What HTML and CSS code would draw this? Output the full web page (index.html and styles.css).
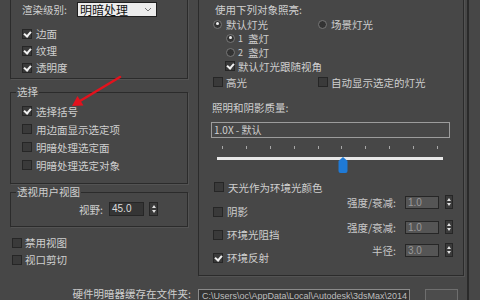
FILE: index.html
```html
<!DOCTYPE html>
<html lang="zh-CN">
<head>
    <meta charset="UTF-8">
    <meta name="viewport" content="width=device-width, initial-scale=1.0">
    <title>视口配置</title>
    <link rel="stylesheet" href="styles.css">
</head>
<body>
    <div class="window">
        <div class="left-col">
            <div class="group render-group">
                <div class="field-row">
                    <span class="render-label">渲染级别:</span>
                    <div class="dropdown">
                        <span>明暗处理</span>
                        <svg width="8" height="5" viewBox="0 0 8 5"><path d="M1 1 L4 4 L7 1" fill="none" stroke="#777" stroke-width="1"/></svg>
                    </div>
                </div>
                <div class="check-row first"><span class="check checked"></span>边面</div>
                <div class="check-row"><span class="check checked"></span>纹理</div>
                <div class="check-row"><span class="check checked"></span>透明度</div>
            </div>

            <fieldset class="select-group">
                <legend>选择</legend>
                <div class="group-body">
                    <div class="check-row"><span class="check checked"></span>选择括号</div>
                    <div class="check-row"><span class="check"></span>用边面显示选定项</div>
                    <div class="check-row"><span class="check"></span>明暗处理选定面</div>
                    <div class="check-row"><span class="check"></span>明暗处理选定对象</div>
                </div>
            </fieldset>

            <fieldset class="view-group">
                <legend>透视用户视图</legend>
                <div class="fov-row">
                    <span class="fov-label">视野:</span>
                    <div class="num-box active">45.0</div>
                    <div class="spinner"><span class="up"></span><span class="down"></span></div>
                </div>
            </fieldset>

            <div class="loose-checks">
                <div class="check-row"><span class="check"></span>禁用视图</div>
                <div class="check-row"><span class="check"></span>视口剪切</div>
            </div>

            <div class="cache-label">硬件明暗器缓存在文件夹:</div>
        </div>

        <div class="right-col">
            <div class="group light-group">
                <div class="group-title">使用下列对象照亮:</div>
                <div class="radio-row">
                    <div class="radio-item wide"><span class="radio on"></span>默认灯光</div>
                    <div class="radio-item"><span class="radio"></span>场景灯光</div>
                </div>
                <div class="radio-row sub"><div class="radio-item"><span class="radio on"></span><span class="num">1</span>盏灯</div></div>
                <div class="radio-row sub"><div class="radio-item"><span class="radio"></span><span class="num">2</span>盏灯</div></div>
                <div class="check-row sub"><span class="check checked"></span>默认灯光跟随视角</div>
                <div class="option-row">
                    <div class="check-row wide"><span class="check"></span>高光</div>
                    <div class="check-row"><span class="check"></span>自动显示选定的灯光</div>
                </div>

                <div class="section-title">照明和阴影质量:</div>
                <div class="quality-box">1.0X - 默认</div>
                <div class="slider">
                    <div class="ticks">
                        <span class="tick"></span><span class="tick"></span><span class="tick"></span><span class="tick"></span><span class="tick"></span>
                        <span class="tick"></span><span class="tick"></span><span class="tick"></span><span class="tick"></span><span class="tick"></span>
                    </div>
                    <div class="track"></div>
                    <svg class="thumb" width="10" height="16" viewBox="0 0 10 16"><path d="M5 0 L9.5 4 L9.5 14 Q9.5 16 7.5 16 L2.5 16 Q0.5 16 0.5 14 L0.5 4 Z" fill="#1f7ad6"/></svg>
                </div>

                <div class="check-row sky-row"><span class="check"></span>天光作为环境光颜色</div>
                <div class="lower">
                    <div class="lower-left">
                        <div class="check-row"><span class="check"></span>阴影</div>
                        <div class="check-row"><span class="check"></span>环境光阻挡</div>
                        <div class="check-row"><span class="check checked"></span>环境反射</div>
                    </div>
                    <div class="lower-right">
                        <div class="spin-row r1">
                            <span class="spin-label">强度/衰减:</span>
                            <div class="num-box">1.0</div>
                            <div class="spinner"><span class="up"></span><span class="down"></span></div>
                        </div>
                        <div class="spin-row r2">
                            <span class="spin-label">强度/衰减:</span>
                            <div class="num-box">1.0</div>
                            <div class="spinner"><span class="up"></span><span class="down"></span></div>
                        </div>
                        <div class="spin-row r3">
                            <span class="spin-label">半径:</span>
                            <div class="num-box">3.0</div>
                            <div class="spinner"><span class="up"></span><span class="down"></span></div>
                        </div>
                    </div>
                </div>
            </div>

            <div class="path-row">
                <div class="path-box">C:\Users\oc\AppData\Local\Autodesk\3dsMax\2014</div>
                <div class="browse-btn"></div>
            </div>
        </div>

        <div class="frame-edge"></div>
    </div>

    <!-- annotation arrow drawn over the dialog -->
    <svg class="arrow" width="480" height="300" viewBox="0 0 480 300">
        <line x1="120" y1="77" x2="80" y2="101" stroke="#e3121d" stroke-width="2.5" stroke-linecap="round"/>
        <polygon points="72,106 83.5,105.5 77.5,96" fill="#e3121d"/>
    </svg>
</body>
</html>
```

FILE: styles.css
```css
body {
    margin: 0;
    width: 480px;
    height: 300px;
    overflow: hidden;
    position: relative;
    background-color: #474747;
    color: #cfcfcf;
    font-family: "Noto Sans CJK SC", "Liberation Sans", sans-serif;
    font-size: 10.5px;
}
.window {
    display: flex;
    padding-left: 10px;
}
.left-col {
    width: 178px;
    flex-shrink: 0;
}
.right-col {
    width: 266px;
    margin-left: 10px;
    flex-shrink: 0;
}
.frame-edge {
    width: 2px;
    height: 300px;
    margin-left: 3px;
    background: #2a2a2a;
}
.group,
fieldset {
    border: 1px solid #2b2b2b;
    box-shadow: 1px 1px 0 #535353;
}

/* checkboxes and radios */
.check-row {
    display: flex;
    align-items: center;
    gap: 4px;
    height: 17px;
    white-space: nowrap;
}
.check {
    position: relative;
    width: 10px;
    height: 10px;
    box-sizing: border-box;
    border: 1px solid #262626;
    background: #3a3a3a;
    flex-shrink: 0;
}
.check.checked::after {
    content: '';
    position: absolute;
    left: 2px;
    top: 0;
    width: 3px;
    height: 5px;
    border: solid #f2f2f2;
    border-width: 0 2px 2px 0;
    transform: rotate(40deg);
}
.radio {
    position: relative;
    width: 9px;
    height: 9px;
    box-sizing: border-box;
    border-radius: 50%;
    border: 1.5px solid #777;
    background: #333;
    flex-shrink: 0;
}
.radio.on::after {
    content: '';
    position: absolute;
    left: 1.5px;
    top: 1.5px;
    width: 3px;
    height: 3px;
    border-radius: 50%;
    background: #f0f0f0;
}

/* left column */
.render-group {
    margin-top: -10px;
    padding: 11px 0 2px 11px;
}
.field-row {
    display: flex;
    align-items: center;
    height: 15px;
}
.render-label {
    width: 55px;
}
.dropdown {
    display: flex;
    align-items: center;
    justify-content: space-between;
    width: 80px;
    height: 15px;
    box-sizing: border-box;
    padding: 0 4px 0 2px;
    border: 1px solid #1e1e1e;
    background: #ececec;
    color: #111;
    font-size: 12px;
    line-height: 13px;
}
.check-row.first {
    margin-top: 8px;
}
fieldset {
    margin: 0;
    padding: 3px 0 9px 0;
    min-width: 0;
}
legend {
    margin-left: 5px;
    padding: 0 1px;
    line-height: 14px;
}
.select-group {
    margin-top: 6px;
}
.group-body {
    padding-left: 11px;
}
.select-group .check-row {
    height: 18px;
}
.view-group {
    margin-top: 1px;
    padding-bottom: 10px;
}
.fov-row {
    display: flex;
    align-items: center;
    height: 14px;
    padding-left: 68px;
}
.fov-label {
    width: 30px;
}
.num-box {
    width: 34px;
    height: 13px;
    box-sizing: border-box;
    padding-left: 2px;
    border: 1px solid #262626;
    background: #555;
    color: #9a9a9a;
    font-family: "Liberation Sans", sans-serif;
    font-size: 10px;
    line-height: 11px;
}
.num-box.active {
    width: 35px;
    height: 14px;
    line-height: 12px;
    background: #353535;
    color: #dcdcdc;
}
.spinner {
    display: flex;
    flex-direction: column;
    justify-content: center;
    gap: 2px;
    width: 9px;
    height: 14px;
    box-sizing: border-box;
    margin-left: 5px;
    border: 1px solid #262626;
    background: #3a3a3a;
}
.spinner span {
    align-self: center;
    width: 0;
    height: 0;
    border-left: 2.5px solid transparent;
    border-right: 2.5px solid transparent;
}
.spinner .up {
    border-bottom: 3px solid #e0e0e0;
}
.spinner .down {
    border-top: 3px solid #e0e0e0;
}
.loose-checks {
    margin-top: 7px;
    padding-left: 2px;
}
.loose-checks .check-row {
    gap: 3px;
}
.cache-label {
    margin-top: 19px;
    margin-right: -3px;
    line-height: 14px;
    text-align: right;
}

/* right column */
.light-group {
    margin-top: -10px;
    padding: 12px 10px 6px 14px;
}
.group-title {
    margin-left: 2px;
    line-height: 14px;
}
.radio-row {
    display: flex;
    height: 14px;
}
.radio-row:first-of-type {
    margin-top: 5px;
}
.radio-item {
    display: flex;
    align-items: center;
    gap: 4px;
    white-space: nowrap;
}
.wide {
    width: 105px;
}
.radio-row.sub {
    margin-left: 13px;
}
.radio-row.sub .radio-item {
    gap: 3px;
}
.num {
    font-size: 9px;
    margin-right: 2px;
}
.check-row.sub {
    height: 14px;
    margin-left: 12px;
    gap: 3px;
}
.option-row {
    display: flex;
    margin-top: 2px;
}
.option-row .check-row {
    height: 14px;
    gap: 3px;
}
.section-title {
    margin-top: 12px;
    margin-left: -1px;
    line-height: 14px;
}
.quality-box {
    width: 239px;
    height: 16px;
    box-sizing: border-box;
    margin: 7px 0 0 -2px;
    padding-left: 2px;
    border: 1px solid #9c9c9c;
    line-height: 14px;
    font-size: 10px;
}
.slider {
    position: relative;
    width: 232px;
    height: 30px;
    margin-top: 4px;
}
.ticks {
    display: flex;
    justify-content: space-between;
    height: 3px;
    padding: 0 7px 0 9px;
    margin-top: 8px;
}
.tick {
    width: 1px;
    height: 3px;
    background: #a8a8a8;
}
.track {
    width: 226px;
    height: 3px;
    margin: 8px 0 0 4px;
    background: #e8e8e8;
}
.thumb {
    position: absolute;
    left: 125px;
    top: 11px;
}
.sky-row {
    height: 14px;
    margin-top: 4px;
    margin-left: 1px;
}
.lower {
    display: flex;
    justify-content: space-between;
}
.lower-left {
    margin-top: 6px;
}
.lower-left .check-row {
    height: 23px;
}
.lower-right {
    display: flex;
    flex-direction: column;
    align-items: flex-end;
}
.spin-row {
    display: flex;
    align-items: center;
    height: 14px;
}
.spin-row.r1 {
    margin-top: 1px;
}
.spin-row.r2 {
    margin-top: 11px;
}
.spin-row.r3 {
    margin-top: 9px;
}
.spin-label {
    margin-right: 9px;
    color: #c8c8c8;
}
.spin-row .spinner {
    margin-left: 6px;
    width: 8px;
}
.path-row {
    display: flex;
    margin-top: 13px;
}
.path-box {
    width: 212px;
    height: 16px;
    box-sizing: border-box;
    padding-left: 3px;
    border: 1px solid #8a8a8a;
    background: #333;
    color: #bdbdbd;
    font-family: "Liberation Sans", sans-serif;
    font-size: 9px;
    line-height: 13px;
    white-space: nowrap;
    overflow: hidden;
}
.browse-btn {
    width: 33px;
    height: 16px;
    box-sizing: border-box;
    margin-left: 15px;
    border: 1px solid #6e6e6e;
    background: #4c4c4c;
}
.arrow {
    position: absolute;
    left: 0;
    top: 0;
    pointer-events: none;
}
```
